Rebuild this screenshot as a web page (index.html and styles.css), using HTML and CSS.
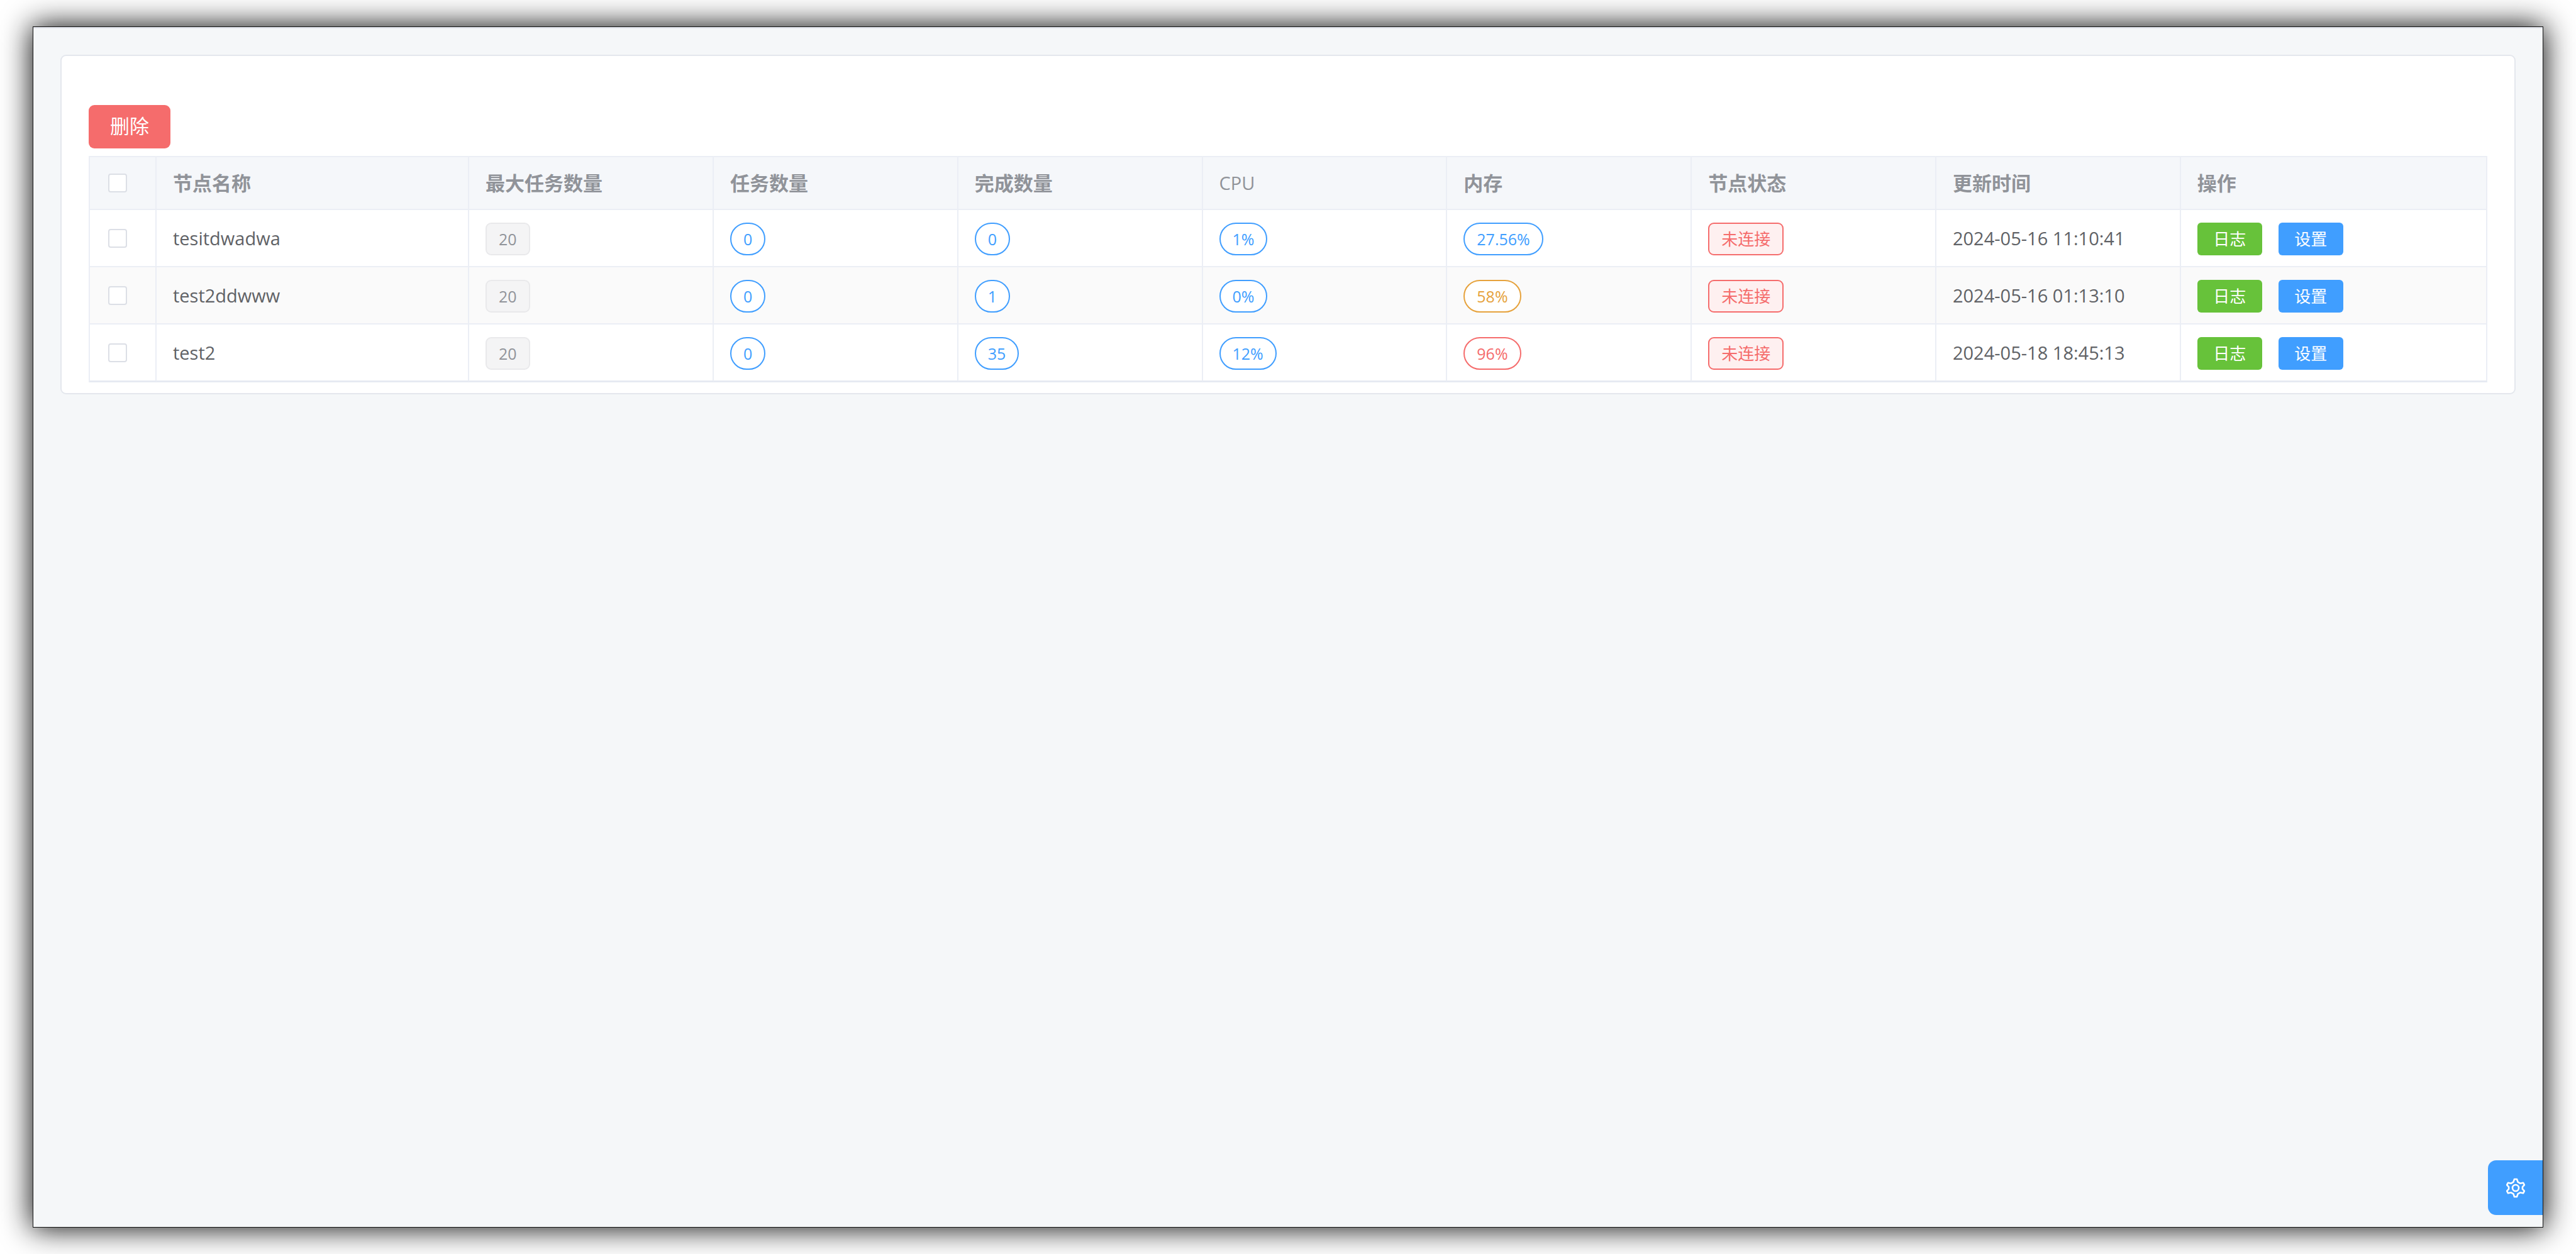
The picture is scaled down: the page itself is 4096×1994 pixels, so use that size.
FILE: index.html
```html
<!DOCTYPE html>
<html lang="zh-CN">
<head>
<meta charset="utf-8">
<title>节点管理</title>
<link rel="stylesheet" href="styles.css">
</head>
<body>
<main class="window">
  <section class="card">
    <button type="button" class="btn btn-delete">删除</button>
    <div class="table-wrap">
      <table class="table">
        <colgroup>
          <col class="col-check"><col class="col-name"><col class="col-data"><col class="col-data"><col class="col-data"><col class="col-data"><col class="col-data"><col class="col-data"><col class="col-data"><col>
        </colgroup>
        <thead>
          <tr>
            <th class="check"><input type="checkbox" aria-label="全选"></th>
            <th>节点名称</th><th>最大任务数量</th><th>任务数量</th><th>完成数量</th><th class="latin">CPU</th><th>内存</th><th>节点状态</th><th>更新时间</th><th>操作</th>
          </tr>
        </thead>
        <tbody>
          <tr>
            <td class="check"><input type="checkbox" aria-label="选择 tesitdwadwa"></td>
            <td>tesitdwadwa</td>
            <td><span class="tag info">20</span></td>
            <td><span class="tag round">0</span></td>
            <td><span class="tag round">0</span></td>
            <td><span class="tag round">1%</span></td>
            <td><span class="tag round">27.56%</span></td>
            <td><span class="tag offline">未连接</span></td>
            <td>2024-05-16 11:10:41</td>
            <td><div class="actions"><button type="button" class="btn small success">日志</button><button type="button" class="btn small primary">设置</button></div></td>
          </tr>
          <tr>
            <td class="check"><input type="checkbox" aria-label="选择 test2ddwww"></td>
            <td>test2ddwww</td>
            <td><span class="tag info">20</span></td>
            <td><span class="tag round">0</span></td>
            <td><span class="tag round">1</span></td>
            <td><span class="tag round">0%</span></td>
            <td><span class="tag round warning">58%</span></td>
            <td><span class="tag offline">未连接</span></td>
            <td>2024-05-16 01:13:10</td>
            <td><div class="actions"><button type="button" class="btn small success">日志</button><button type="button" class="btn small primary">设置</button></div></td>
          </tr>
          <tr>
            <td class="check"><input type="checkbox" aria-label="选择 test2"></td>
            <td>test2</td>
            <td><span class="tag info">20</span></td>
            <td><span class="tag round">0</span></td>
            <td><span class="tag round">35</span></td>
            <td><span class="tag round">12%</span></td>
            <td><span class="tag round danger">96%</span></td>
            <td><span class="tag offline">未连接</span></td>
            <td>2024-05-18 18:45:13</td>
            <td><div class="actions"><button type="button" class="btn small success">日志</button><button type="button" class="btn small primary">设置</button></div></td>
          </tr>
        </tbody>
      </table>
    </div>
  </section>
  <button type="button" class="settings" aria-label="设置">
    <svg viewBox="0 0 30 32" fill="none" stroke="currentColor" stroke-width="2.6" stroke-linejoin="round">
      <path d="M13 2h4l1.600 4.600 3.600 2.100 4.800-1 1.900 3.400-3 3.200v3.400l3 3.200-1.900 3.400-4.800-1-3.600 2.100L17 30h-4l-1.600-4.600-3.600-2.100-4.800 1-1.900-3.400 3-3.200v-3.400l-3-3.200L3 7.700l4.800 1 3.600-2.100z"/>
      <circle cx="15" cy="16" r="5"/>
    </svg>
  </button>
</main>
</body>
</html>
```
FILE: styles.css
```css
* { box-sizing: border-box; }

body {
  margin: 0;
  min-height: 100vh;
  padding: 42px 52px;
  display: flex;
  background: #fff;
  color: #606266;
  font-family: "Open Sans", "Noto Sans CJK SC", sans-serif;
  font-size: 29px;
  line-height: 42px;
}

.window {
  position: relative;
  flex: 1;
  padding: 44px 43px;
  background: #f5f7f9;
  border: 1px solid #111;
  box-shadow: 0 0 44px 2px rgba(0, 0, 0, .95), inset 0 2px 0 #e2e4ec;
}

.card {
  padding: 78px 43px 17px;
  background: #fff;
  border: 2px solid #e4e7ed;
  border-radius: 9px;
}

.btn {
  display: block;
  padding: 0;
  border: 0;
  color: #fff;
  font-family: inherit;
  cursor: pointer;
}

.btn-delete {
  width: 130px;
  height: 69px;
  margin-bottom: 12px;
  padding-bottom: 6px;
  border-radius: 9px;
  background: #f56c6c;
  font-size: 31px;
}

.table-wrap {
  border: 2px solid #ebeef5;
  border-width: 2px 0 1px 2px;
}

.table {
  width: 100%;
  table-layout: fixed;
  border-collapse: separate;
  border-spacing: 0;
}

.col-check { width: 106px; }
.col-name { width: 13.04%; }
.col-data { width: 10.2%; }

th, td {
  padding: 0 26px;
  border: solid #ebeef5;
  border-width: 0 2px 2px 0;
  text-align: left;
  vertical-align: middle;
}

th {
  height: 84px;
  background: #f5f7fa;
  color: #909399;
  font-size: 31px;
  font-weight: 700;
}

th.latin {
  font-size: 29px;
  font-weight: 500;
}

td { height: 91px; }

tbody tr:nth-child(even) td { background: #fafafa; }

.table-wrap,
tbody tr:last-child td { border-bottom-color: #e6eaf2; }

.check { padding: 0 0 0 29px; }

input[type="checkbox"] {
  appearance: none;
  display: block;
  width: 30px;
  height: 30px;
  margin: 0;
  border: 2px solid #dcdfe6;
  border-radius: 4px;
  background: #fff;
}

.tag {
  display: block;
  width: max-content;
  height: 52px;
  margin-top: 2px;
  padding: 0 19px;
  border: 2px solid #409eff;
  border-radius: 9px;
  background: #fff;
  color: #409eff;
  font-size: 25px;
  line-height: 48px;
}

.round { border-radius: 26px; }
.info { border-color: #e9e9eb; background: #f4f4f5; color: #909399; }
.warning { border-color: #e6a23c; color: #e6a23c; }
.danger { border-color: #f56c6c; color: #f56c6c; }
.offline { border-color: #f56c6c; background: #fef0f0; color: #f56c6c; font-size: 26px; }

.actions {
  display: flex;
  gap: 26px;
  margin-top: 2px;
}

.small {
  width: 103px;
  height: 52px;
  border-radius: 6px;
  font-size: 26px;
  line-height: 52px;
}

.success { background: #67c23a; }
.primary { background: #409eff; }

.settings {
  position: absolute;
  right: 0;
  bottom: 19px;
  display: grid;
  place-items: center;
  width: 87px;
  height: 87px;
  padding: 0;
  border: 0;
  border-radius: 13px 0 0 13px;
  background: #409eff;
  color: #fff;
  cursor: pointer;
}

.settings svg {
  width: 30px;
  height: 32px;
}
```
